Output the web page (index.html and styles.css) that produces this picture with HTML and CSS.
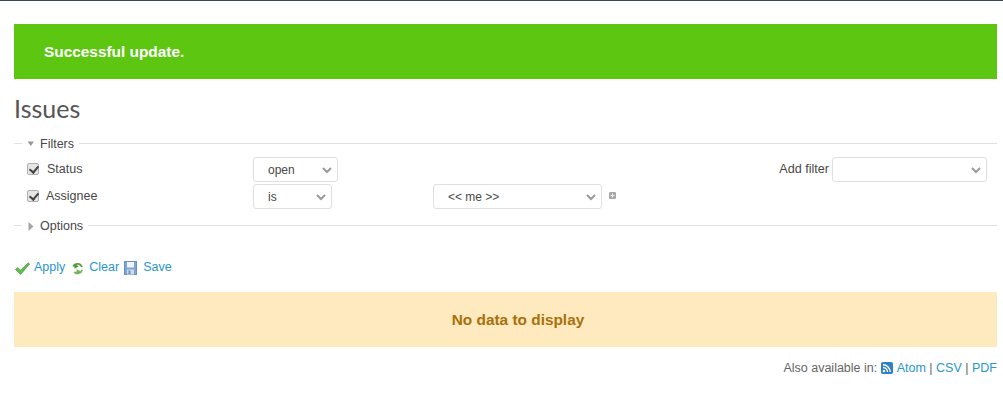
FILE: index.html
```html
<!DOCTYPE html>
<html lang="en">
<head>
<meta charset="utf-8">
<title>Issues</title>
<link rel="stylesheet" href="styles.css">
</head>
<body>
<div class="topbar"></div>
<main class="content">
  <div class="flash">Successful update.</div>
  <h2 class="title">Issues</h2>
  <form>
    <fieldset class="group">
      <legend class="legend"><svg class="tri" width="8" height="6" viewBox="0 0 8 6"><path d="M0.5 0.5H7L3.75 5Z" fill="#999"/></svg>Filters</legend>
      <div class="filter-wrap">
        <div class="filters">
          <div class="row">
            <label class="field"><input type="checkbox" checked class="check"><span class="name">Status</span></label>
            <div class="sel w-open"><select><option>open</option></select><svg class="chev" width="10" height="7" viewBox="0 0 10 7"><path d="M1 1L5 5L9 1" fill="none" stroke="#9a9a9a" stroke-width="2"/></svg></div>
          </div>
          <div class="row">
            <label class="field"><input type="checkbox" checked class="check"><span class="name alt">Assignee</span></label>
            <div class="sel w-is"><select><option>is</option></select><svg class="chev" width="10" height="7" viewBox="0 0 10 7"><path d="M1 1L5 5L9 1" fill="none" stroke="#9a9a9a" stroke-width="2"/></svg></div>
            <div class="sel w-me"><select><option>&lt;&lt; me &gt;&gt;</option></select><svg class="chev" width="10" height="7" viewBox="0 0 10 7"><path d="M1 1L5 5L9 1" fill="none" stroke="#9a9a9a" stroke-width="2"/></svg></div>
            <svg class="plus" width="7" height="7" viewBox="0 0 7 7"><rect width="7" height="7" rx="1" fill="#a8a8a8"/><path d="M3.5 1.5V5.5M1.5 3.5H5.5" stroke="#eee" stroke-width="1"/></svg>
          </div>
        </div>
        <div class="add"><span class="add-label">Add filter</span><div class="sel w-add"><select><option></option></select><svg class="chev" width="10" height="7" viewBox="0 0 10 7"><path d="M1 1L5 5L9 1" fill="none" stroke="#9a9a9a" stroke-width="2"/></svg></div></div>
      </div>
    </fieldset>
    <fieldset class="group collapsed">
      <legend class="legend"><svg class="tri side" width="6" height="9" viewBox="0 0 6 9"><path d="M0.5 0L5.5 4.5L0.5 9Z" fill="#a5a5a5"/></svg>Options</legend>
    </fieldset>
    <p class="buttons">
      <a href="#" class="act"><svg class="ic-apply" width="15" height="13" viewBox="0 0 15 13"><path d="M0.5 7.5L2.8 5.6L5.5 8.2L13.2 .8L14.6 2L5.6 12.5Z" fill="#62bb4e" stroke="#4a9a42" stroke-width=".7"/></svg>Apply</a>
      <a href="#" class="act"><svg class="ic-clear" width="13" height="14" viewBox="0 0 13 14"><path d="M2.2 5.5A4.8 4.8 0 0 1 11 6" fill="none" stroke="#5f9f42" stroke-width="1.8"/><path d="M11.2 8.8A4.8 4.8 0 0 1 3.2 11" fill="none" stroke="#79b65a" stroke-width="1.8"/><path d="M3.5 3.2L7.8 5.2L3.5 7.8Z" fill="#4f9136"/><path d="M5.5 8.2L9.6 10.2L5.6 13.4Z" fill="#72b052"/></svg>Clear</a>
      <a href="#" class="act"><svg class="ic-save" width="13" height="14" viewBox="0 0 13 14"><rect x=".5" y=".5" width="12" height="13" fill="#7ba6dc" stroke="#6b90c0"/><rect x="3" y="1" width="7" height="5.5" fill="#f1f5fb"/><rect x="3" y="8.5" width="7" height="5" fill="#d3dbe5"/><rect x="4.5" y="9.5" width="2" height="3.5" fill="#6b90c0"/></svg>Save</a>
    </p>
  </form>
  <p class="nodata">No data to display</p>
  <p class="other">Also available in: <a href="#" class="feed"><svg width="12" height="12" viewBox="0 0 12 12"><rect width="12" height="12" rx="2" fill="#2f7fc4"/><circle cx="3" cy="9" r="1.3" fill="#fff"/><path d="M2 5.5A4.5 4.5 0 0 1 6.5 10M2 2.8A7.2 7.2 0 0 1 9.2 10" fill="none" stroke="#fff" stroke-width="1.4"/></svg>Atom</a> | <a href="#">CSV</a> | <a href="#">PDF</a></p>
</main>
</body>
</html>
```
FILE: styles.css
```css
* { box-sizing: border-box; }
html, body { margin: 0; padding: 0; background: #fff; }
body {
  font-family: "Liberation Sans", Arial, sans-serif;
  font-size: 12.5px;
  color: #484848;
  height: 401px;
  overflow: hidden;
}
a { color: #2996cc; text-decoration: none; }
.topbar { height: 1px; background: #3e4a52; }
.content { padding: 23px 6px 0 14px; }
.flash {
  height: 55px;
  line-height: 56px;
  padding-left: 30px;
  background: #5cc610;
  color: #fff;
  font-size: 15.4px;
  font-weight: bold;
}
.title {
  margin: 15px 0 0;
  height: 30px;
  line-height: 29px;
  font-family: Lato, sans-serif;
  font-size: 25px;
  font-weight: 400;
  color: #555;
}
.group {
  margin: 11px 0 0;
  padding: 0;
  border: 0;
  border-top: 1px solid #e0e0e0;
  min-width: 0;
}
.group.collapsed { margin-top: 8px; }
.legend {
  margin-left: 8px;
  padding: 2px 5px 0;
  height: 16px;
  line-height: 14px;
  display: flex;
  align-items: center;
  color: #484848;
}
.tri { margin-right: 5px; }
.tri.side { margin-left: 1px; margin-right: 6px; }
.filter-wrap {
  display: flex;
  justify-content: space-between;
  padding: 6px 10px 0 13px;
}
.filters { display: flex; flex-direction: column; gap: 2px; }
.row { display: flex; align-items: center; height: 25px; }
.field { display: flex; align-items: center; width: 226px; margin-top: -2px; }
.check {
  appearance: none;
  -webkit-appearance: none;
  position: relative;
  margin: 0 8px 0 0;
  width: 12px;
  height: 12px;
  background: #e6e6e6;
  border: 1px solid #b0b0b0;
  border-radius: 2px;
}
.check:checked::after {
  content: "";
  position: absolute;
  left: 3px;
  top: 0;
  width: 4px;
  height: 7px;
  border: solid #444;
  border-width: 0 2px 2px 0;
  transform: rotate(40deg);
}
.name.alt { margin-left: -1px; }
.sel { position: relative; height: 25px; }
.sel select {
  appearance: none;
  -webkit-appearance: none;
  width: 100%;
  height: 100%;
  border: 1px solid #e0e0e0;
  border-radius: 3px;
  background: #fff;
  padding: 0 0 0 14px;
  font-family: "Liberation Sans", Arial, sans-serif;
  font-size: 12px;
  color: #484848;
}
.chev { position: absolute; right: 6px; top: 10px; }
.w-open { width: 85px; }
.w-is { width: 79px; margin-right: 101px; }
.w-me { width: 169px; }
.w-add { width: 155px; }
.plus { margin-left: 7px; margin-top: -3px; }
.add { display: flex; align-items: center; height: 25px; }
.add-label { margin-right: 3px; margin-top: -2px; font-size: 12.6px; }
.buttons {
  margin: 25px 0 0;
  display: flex;
  height: 18px;
  align-items: center;
  gap: 6px;
}
.act { display: inline-flex; align-items: center; gap: 5px; }
.act svg { flex: none; margin-top: 2px; }
.ic-apply { margin-left: 1px; margin-right: -1px; }
.ic-save { margin-left: -1px; margin-right: 1px; }
.nodata {
  margin: 16px 0 0;
  height: 55px;
  line-height: 56px;
  padding-left: 25px;
  text-align: center;
  background: #ffe9bf;
  color: #a8700a;
  font-size: 15.4px;
  font-weight: bold;
}
.other {
  margin: 14px 0 0;
  text-align: right;
  color: #666;
}
.feed svg { vertical-align: -2px; margin-right: 4px; }
```
